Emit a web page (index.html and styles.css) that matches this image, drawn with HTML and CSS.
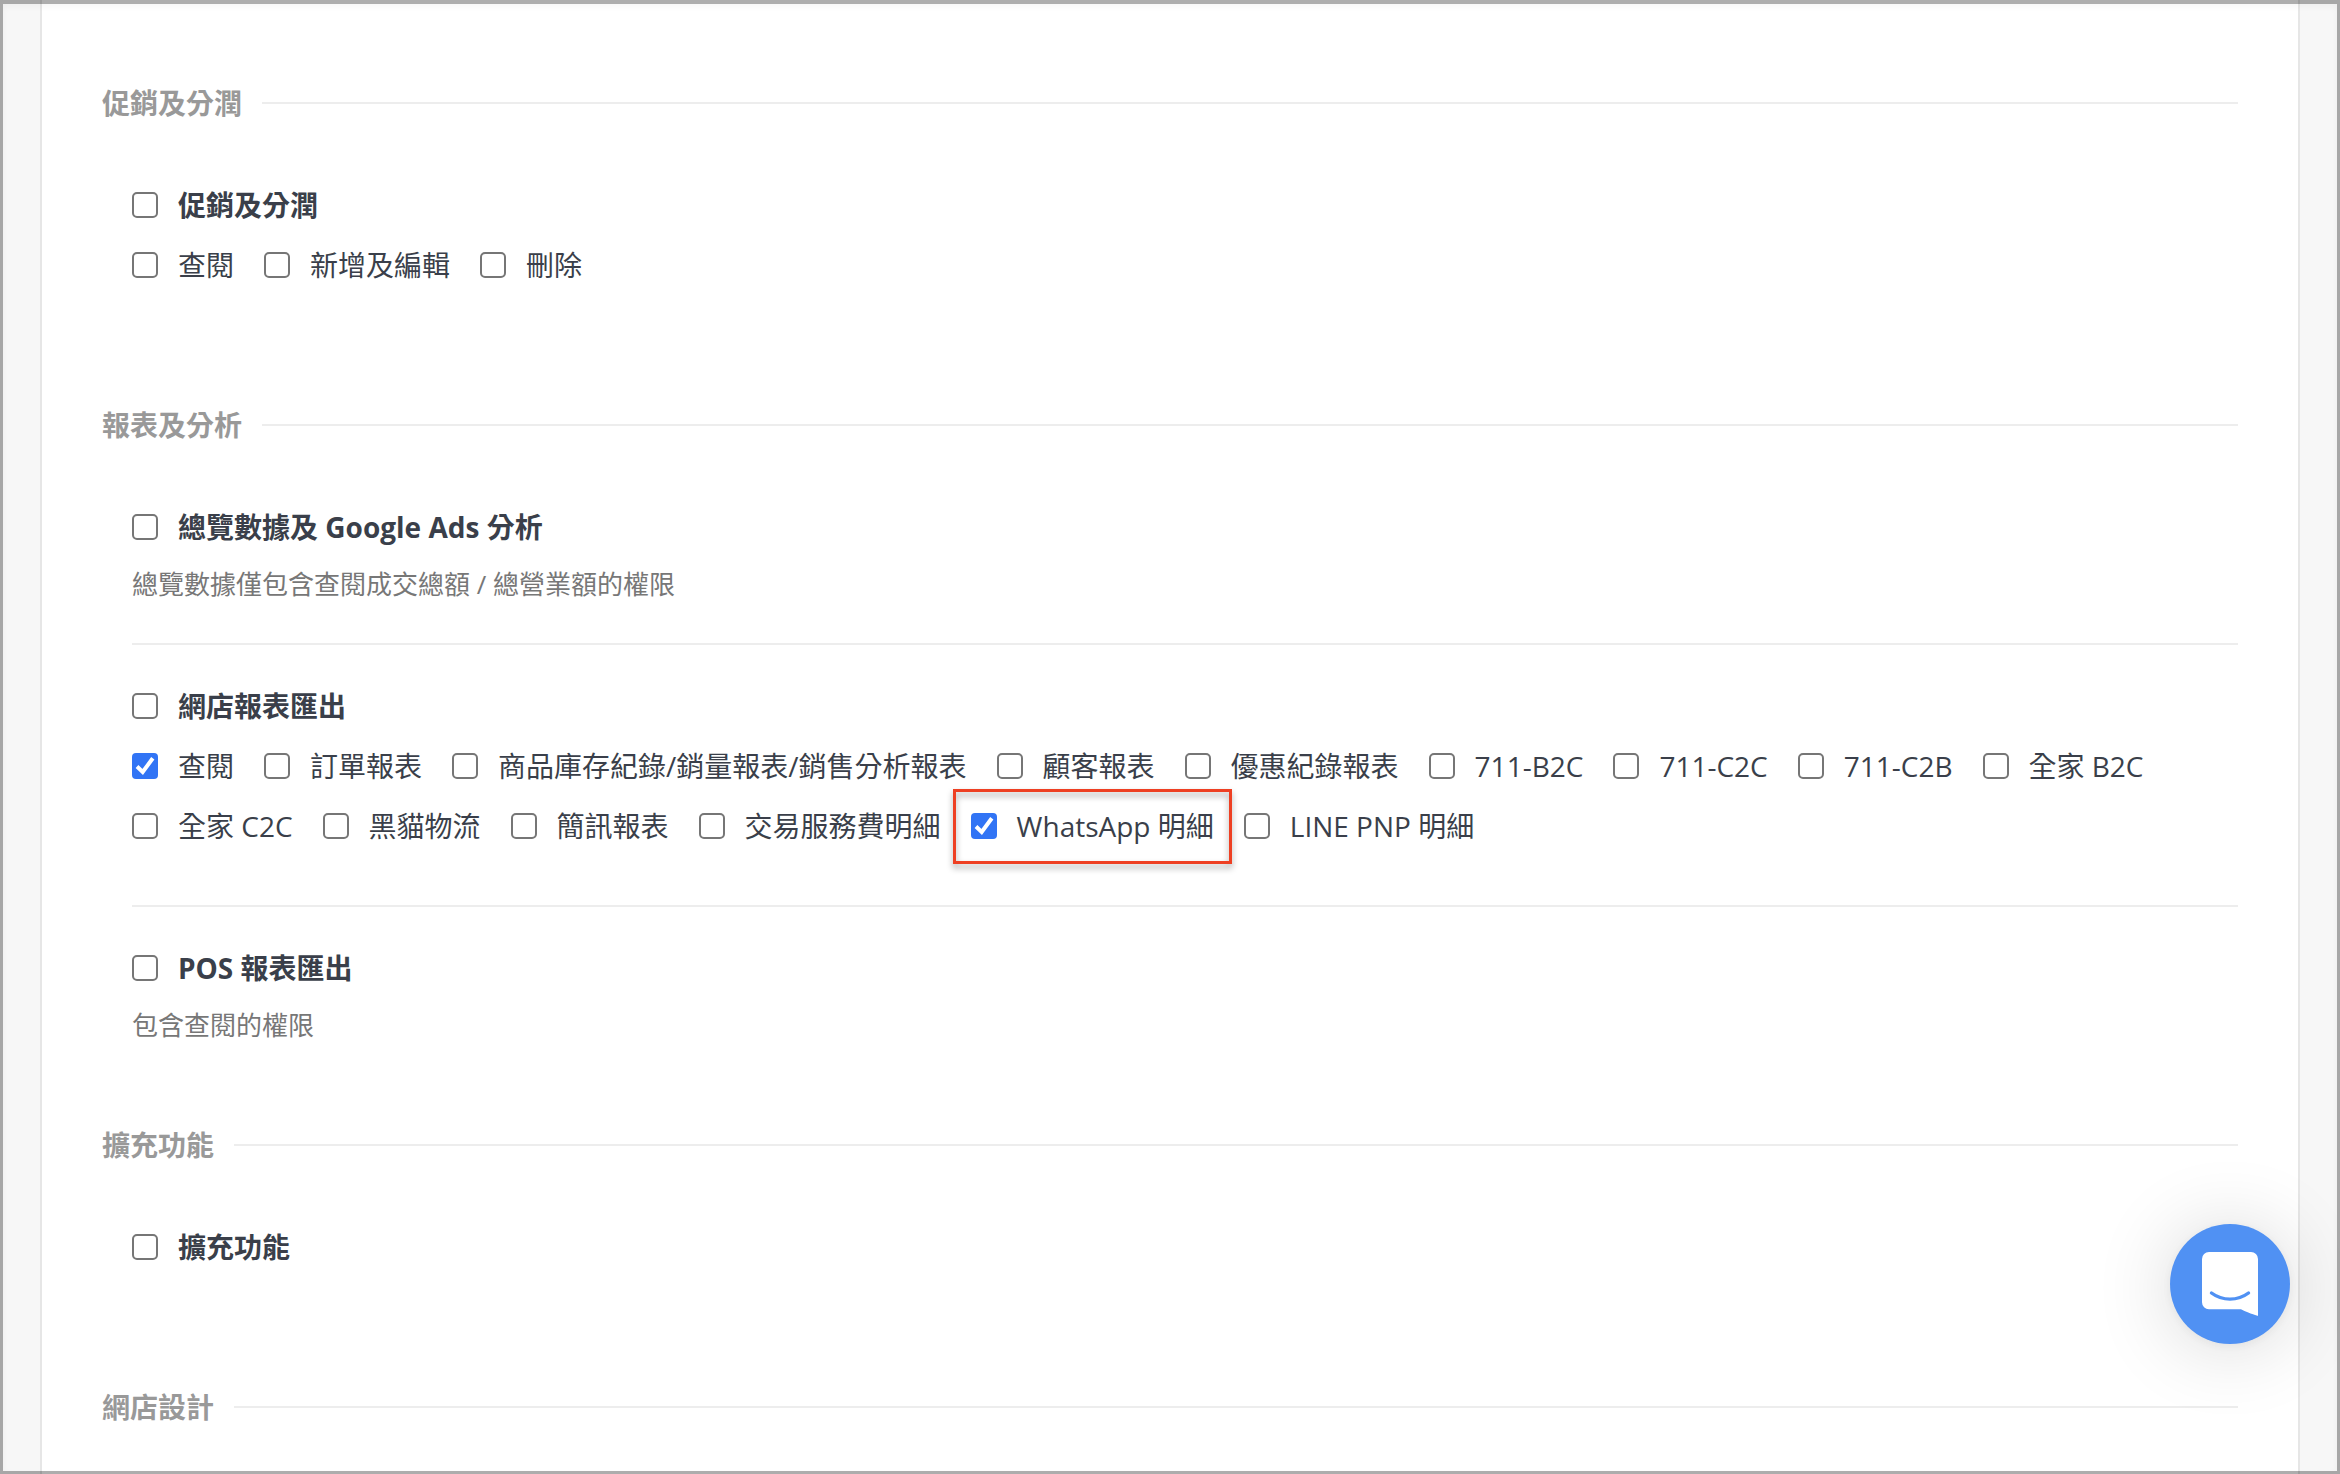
FILE: index.html
```html
<!DOCTYPE html>
<html lang="zh-Hant">

<head>
    <meta charset="UTF-8">
    <meta name="viewport" content="width=device-width, initial-scale=1.0">
    <title>權限設定</title>
    <link rel="stylesheet" href="styles.css">
</head>

<body>
    <main class="panel">
        <section class="section single">
            <h2 class="section-title">促銷及分潤</h2>
            <div class="group">
                <label class="item title"><input type="checkbox"><span>促銷及分潤</span></label>
                <div class="list">
                    <label class="item"><input type="checkbox"><span>查閱</span></label>
                    <label class="item"><input type="checkbox"><span>新增及編輯</span></label>
                    <label class="item"><input type="checkbox"><span>刪除</span></label>
                </div>
            </div>
        </section>

        <section class="section">
            <h2 class="section-title">報表及分析</h2>
            <div class="group">
                <label class="item title"><input type="checkbox"><span>總覽數據及 Google Ads 分析</span></label>
                <p class="desc">總覽數據僅包含查閱成交總額 / 總營業額的權限</p>
            </div>
            <div class="group">
                <label class="item title"><input type="checkbox"><span>網店報表匯出</span></label>
                <div class="list">
                    <label class="item"><input type="checkbox" checked><span>查閱</span></label>
                    <label class="item"><input type="checkbox"><span>訂單報表</span></label>
                    <label class="item"><input type="checkbox"><span>商品庫存紀錄/銷量報表/銷售分析報表</span></label>
                    <label class="item"><input type="checkbox"><span>顧客報表</span></label>
                    <label class="item"><input type="checkbox"><span>優惠紀錄報表</span></label>
                    <label class="item"><input type="checkbox"><span>711-B2C</span></label>
                    <label class="item"><input type="checkbox"><span>711-C2C</span></label>
                    <label class="item"><input type="checkbox"><span>711-C2B</span></label>
                    <label class="item"><input type="checkbox"><span>全家 B2C</span></label>
                    <label class="item"><input type="checkbox"><span>全家 C2C</span></label>
                    <label class="item"><input type="checkbox"><span>黑貓物流</span></label>
                    <label class="item"><input type="checkbox"><span>簡訊報表</span></label>
                    <label class="item"><input type="checkbox"><span>交易服務費明細</span></label>
                    <label class="item marked"><input type="checkbox" checked><span>WhatsApp 明細</span></label>
                    <label class="item"><input type="checkbox"><span>LINE PNP 明細</span></label>
                </div>
            </div>
            <div class="group">
                <label class="item title"><input type="checkbox"><span>POS 報表匯出</span></label>
                <p class="desc">包含查閱的權限</p>
            </div>
        </section>

        <section class="section single">
            <h2 class="section-title">擴充功能</h2>
            <div class="group">
                <label class="item title"><input type="checkbox"><span>擴充功能</span></label>
            </div>
        </section>

        <section class="section">
            <h2 class="section-title">網店設計</h2>
        </section>
    </main>

    <button class="chat" aria-label="chat">
        <svg width="56" height="64" viewBox="0 0 56 64">
            <path fill="#fff" d="M7 0h42a7 7 0 0 1 7 7v57s-7.500-2-17-6.700H7a7 7 0 0 1-7-7V7a7 7 0 0 1 7-7z" />
            <path fill="none" stroke="#5091f3" stroke-width="3.400" stroke-linecap="round" d="M9.500 41c11 8.200 26 8.200 37 0" />
        </svg>
    </button>
    <div class="frame"></div>
</body>

</html>
```

FILE: styles.css
```css
* {
    margin: 0;
    padding: 0;
    box-sizing: border-box;
}

html,
body {
    height: 100%;
    overflow: hidden;
}

body {
    background-color: #f7f7f7;
    font-family: "Open Sans", "Noto Sans CJK TC", sans-serif;
    font-size: 28px;
    line-height: 40px;
    color: #3a3f4a;
}

.panel {
    height: 1474px;
    margin: 0 40px;
    padding: 83px 60px 0;
    background-color: #fff;
    border-left: 2px solid #e6e6e6;
    border-right: 2px solid #e6e6e6;
    overflow: hidden;
}

.section {
    margin-bottom: 41px;
}

.single {
    margin-bottom: 61px;
}

.section-title {
    display: flex;
    align-items: center;
    gap: 20px;
    margin-bottom: 21px;
    font-size: 28px;
    font-weight: 700;
    color: #999;
}

.section-title::after {
    content: "";
    flex: 1;
    height: 2px;
    background-color: #ededed;
}

.group {
    margin-left: 30px;
    padding: 41px 0 39px;
}

.group + .group {
    border-top: 2px solid #ededed;
}

.list {
    display: flex;
    flex-wrap: wrap;
}

.item {
    display: flex;
    align-items: center;
    gap: 20px;
    height: 40px;
    margin: 0 30px 20px 0;
    white-space: nowrap;
}

.title {
    font-weight: 700;
}

.item input {
    appearance: none;
    width: 26px;
    height: 26px;
    border: 2px solid #767676;
    border-radius: 5px;
    background-color: #fff;
}

.item input:checked {
    border: none;
    border-radius: 4px;
    background: #3174f5 url("data:image/svg+xml,%3Csvg xmlns='http://www.w3.org/2000/svg' viewBox='0 0 26 26'%3E%3Cpath d='M5 13.500l5.700 5.500L20.800 5.300' fill='none' stroke='%23fff' stroke-width='4'/%3E%3C/svg%3E") center / 26px 26px no-repeat;
}

.desc {
    height: 37px;
    line-height: 35px;
    font-size: 26px;
    color: #777;
}

/* red box round the WhatsApp item */
.marked {
    position: relative;
}

.marked::after {
    content: "";
    position: absolute;
    top: -17px;
    left: -18px;
    right: -18px;
    height: 69px;
    border: 3px solid #ee4023;
    filter: drop-shadow(0 4px 3px rgba(0, 0, 0, .35));
}

.chat {
    position: fixed;
    right: 50px;
    bottom: 130px;
    display: flex;
    align-items: center;
    justify-content: center;
    width: 120px;
    height: 120px;
    border: none;
    border-radius: 50%;
    background-color: #5091f3;
    box-shadow: 0 2px 12px rgba(0, 0, 0, .06), 0 4px 80px rgba(0, 0, 0, .16);
}

.frame {
    position: fixed;
    inset: 0;
    border: 3px solid rgba(0, 0, 0, .32);
    border-top-width: 4px;
    box-shadow: inset 0 3px 6px rgba(0, 0, 0, .04);
    pointer-events: none;
}
```
